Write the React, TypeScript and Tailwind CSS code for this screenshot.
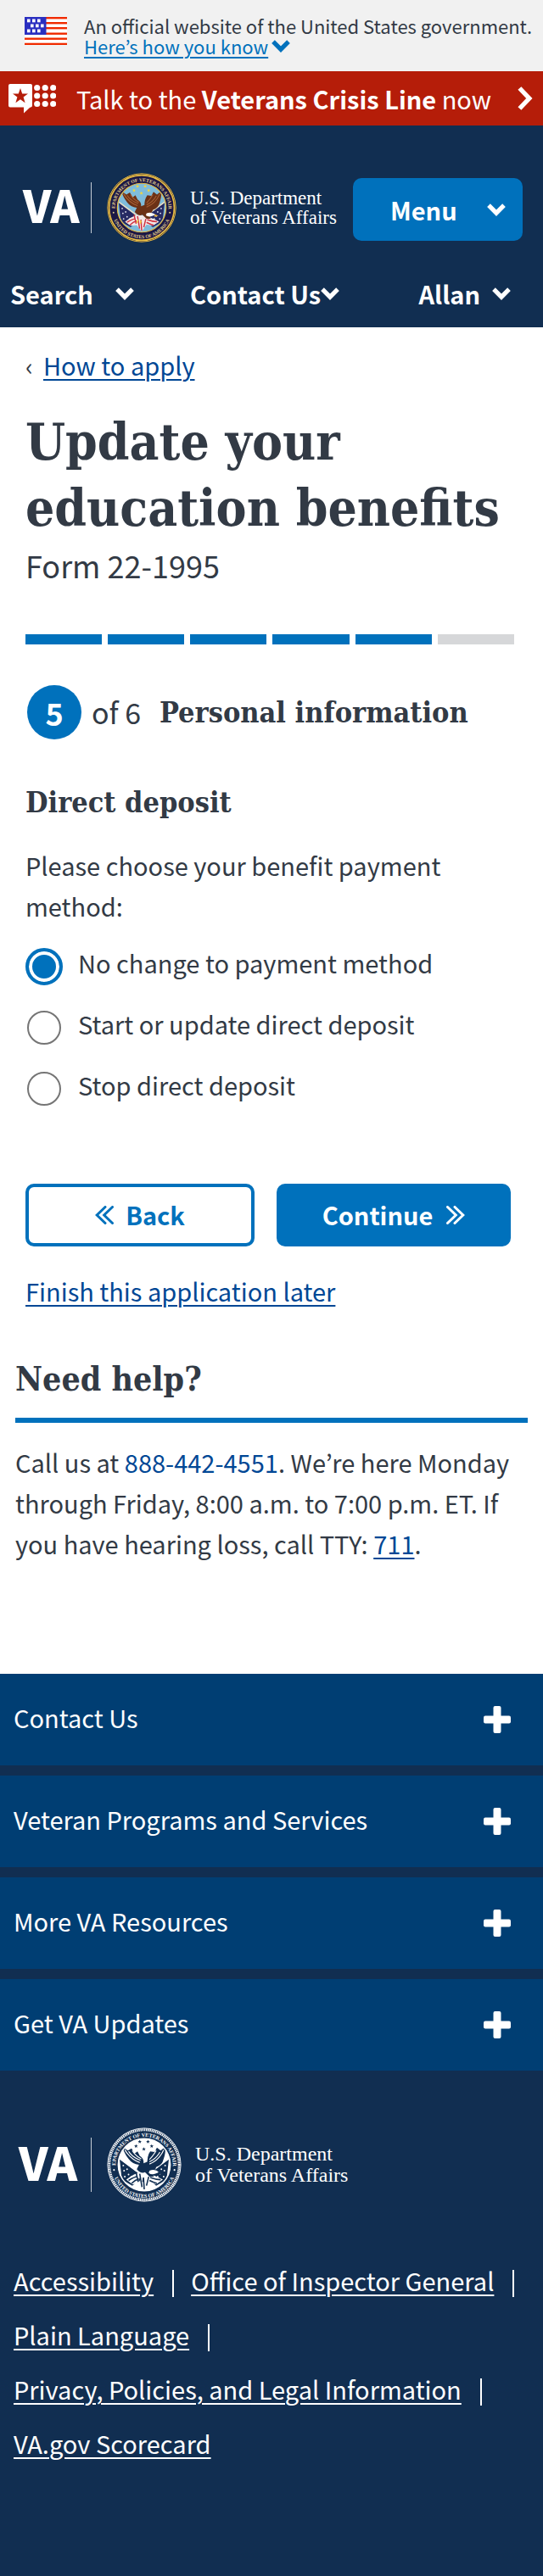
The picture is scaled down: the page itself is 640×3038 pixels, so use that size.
import { useState } from 'react';

const NAVY = '#112e51';

function ChevronDown({ className }: { className: string }) {
  return (
    <svg viewBox="0 0 22 15" className={className} fill="none" stroke="currentColor" strokeWidth="5.2" strokeLinejoin="miter" aria-hidden="true">
      <path d="M2 2.2 L11 11.2 L20 2.2" />
    </svg>
  );
}

function ChevronRight({ className }: { className: string }) {
  return (
    <svg viewBox="0 0 18 28" className={className} fill="none" stroke="currentColor" strokeWidth="5.4" aria-hidden="true">
      <path d="M2.4 2 L13.8 14 L2.4 26" />
    </svg>
  );
}

function DoubleChevron({ direction }: { direction: 'left' | 'right' }) {
  const d =
    direction === 'left'
      ? 'M12 1.5 L2.2 11 L12 20.5 M20.5 1.5 L10.7 11 L20.5 20.5'
      : 'M1.5 1.5 L11.3 11 L1.5 20.5 M10 1.5 L19.8 11 L10 20.5';
  return (
    <svg viewBox="0 0 22 22" className="size-[22px]" fill="none" stroke="currentColor" strokeWidth="3" strokeLinecap="round" aria-hidden="true">
      <path d={d} />
    </svg>
  );
}

function Plus() {
  return (
    <svg viewBox="0 0 32 32" className="size-8" fill="currentColor" aria-hidden="true">
      <rect x="11.5" y="0" width="9" height="32" rx="2" />
      <rect x="0" y="11.5" width="32" height="9" rx="2" />
    </svg>
  );
}

function Flag() {
  const stars: [number, number][] = [
    [3, 2.5], [9, 2.5], [15, 2.5],
    [7, 8.5], [13, 8.5], [19, 8.5],
    [3, 14.5], [9, 14.5], [15, 14.5],
  ];
  return (
    <svg viewBox="0 0 50 33" className="mt-[2px] h-[33px] w-[50px] shrink-0" aria-hidden="true">
      <rect width="50" height="33" fill="#fff" />
      {[0, 6, 12, 18.5, 24.5, 30.7].map((y) => (
        <rect key={y} y={y} width="50" height="2.4" fill="#f02b00" />
      ))}
      <rect width="25.5" height="21" fill="#2a2fc0" />
      {stars.map(([x, y]) => (
        <rect key={`${x}-${y}`} x={x} y={y} width="3.6" height="3.8" fill="#fff" />
      ))}
    </svg>
  );
}

function CrisisIcon() {
  return (
    <svg viewBox="0 0 56 35" className="h-[35px] w-14 shrink-0" aria-hidden="true">
      <path d="M2 0 H26 Q28 0 28 2 V25.5 Q28 27.5 26 27.5 L25 28 L18 34.5 V27.5 H2 Q0 27.5 0 25.5 V2 Q0 0 2 0 Z" fill="#fff" />
      <path d="M14 5 L16.2 11.5 H23 L17.6 15.6 L19.6 22.3 L14 18.3 L8.4 22.3 L10.4 15.6 L5 11.5 H11.8 Z" fill="#b51d09" />
      {[4.5, 14, 23.5].map((cy) =>
        [34, 43.5, 53].map((cx) => <circle key={`${cx}-${cy}`} cx={cx - 0.3} cy={cy} r="3.6" fill="#fff" />),
      )}
    </svg>
  );
}

const STAR = 'M0 -2.6 L.7 -.8 L2.6 -.8 L1.1 .4 L1.6 2.3 L0 1.2 L-1.6 2.3 L-1.1 .4 L-2.6 -.8 L-.7 -.8 Z';
const STARS: [number, number][] = [[44, 19], [55, 19], [39, 25], [60, 25], [49.5, 29]];

function Seal({ id, mono, className }: { id: string; mono?: boolean; className: string }) {
  const c = mono
    ? { edge: '#fff', ring: NAVY, inner: '#fff', text: '#fff', star: NAVY, wing: NAVY, wingLight: '#fff', flag: NAVY, dot: '#fff', red: NAVY, head: '#fff' }
    : { edge: '#e9bf45', ring: '#1b1846', inner: '#7fbcdb', text: '#e3cf8e', star: '#f4d63c', wing: '#6b3116', wingLight: '#a85f33', flag: '#262a63', dot: '#e8e9f2', red: '#cf3340', head: '#fff' };
  return (
    <svg viewBox="0 0 100 100" className={className} role="img" aria-label="Seal of the U.S. Department of Veterans Affairs">
      <defs>
        <path id={`${id}-top`} d="M11.6 50.7 A38.4 38.4 0 1 1 88.4 50.7" />
        <path id={`${id}-bottom`} d="M6.8 55 A43.4 43.4 0 0 0 93.2 55" />
        <clipPath id={`${id}-clip`}><circle cx="50" cy="50" r="34" /></clipPath>
      </defs>
      <circle cx="50" cy="50" r="49.5" fill={mono ? NAVY : '#2b2038'} />
      <circle cx="50" cy="50" r="49" fill="none" stroke={c.edge} strokeWidth={mono ? 1 : 1.2} />
      <circle cx="50" cy="50" r="46.8" fill={c.ring} stroke={c.edge} strokeWidth={mono ? 3.4 : 2} strokeDasharray={mono ? '1.6 .9' : undefined} />
      <circle cx="50" cy="50" r="35" fill={c.inner} stroke={c.edge} strokeWidth="1.4" />
      <g fill={c.text} fontFamily="Liberation Serif, serif" fontWeight="700" fontSize="7">
        <text textAnchor="middle"><textPath href={`#${id}-top`} startOffset="50%">DEPARTMENT OF VETERANS AFFAIRS</textPath></text>
        <text textAnchor="middle"><textPath href={`#${id}-bottom`} startOffset="50%">UNITED STATES OF AMERICA</textPath></text>
      </g>
      <circle cx="9.5" cy="57" r="1.2" fill={c.text} />
      <circle cx="90.5" cy="57" r="1.2" fill={c.text} />
      <g clipPath={`url(#${id}-clip)`}>
        {STARS.map(([x, y]) => (
          <path key={`${x}-${y}`} d={STAR} fill={c.star} transform={`translate(${x} ${y})`} />
        ))}
        <path d="M17 42 L20 70 L34 78 L48 66 Z" fill={c.flag} />
        <path d="M83 42 L80 70 L66 78 L52 66 Z" fill={c.flag} />
        <path d="M16 41 L46 63 M84 41 L54 63" stroke={mono ? '#fff' : '#e8dfc5'} strokeWidth="2" />
        {[[22, 51], [27, 56], [23, 58], [29, 63], [24, 66], [33, 66], [78, 51], [73, 56], [77, 58], [71, 62], [76, 66], [68, 66]].map(([x, y]) => (
          <circle key={`${x}-${y}`} cx={x} cy={y} r="1.1" fill={c.dot} />
        ))}
        <path d="M26 70 Q36 62 45 60 L56 62 Q68 66 75 70 L66 76 L57 74 L50 84 L43 75 L34 76 Z" fill={mono ? '#fff' : '#f2e8e8'} />
        <path d="M29 71 Q37 66 41 66 M33 75 Q38 70 43 69 M39 60 L42 73 M44 62 L47 80 M49 67 L50 83 M56 66 L53 78 M58 67 Q66 70 72 70 M57 71 Q63 74 67 75" fill="none" stroke={c.red} strokeWidth="1.8" />
        <path d="M21 26 Q23 35 29 42 Q34 49 43 50 L40 56 Q46 63 51 60 L57 66 L63 66 L60 59 Q65 58 66 53 Q74 51 76 42 Q79 34 78 26 L72 31 L67 27 L64 33 L58 32 Q54 38 54 46 L49 48 Q50 42 44 38 L41 32 L37 35 L33 28 L28 31 Z" fill={c.wing} />
        <path d="M24 30 Q32 43 44 47 M29 32 Q34 40 45 44 M34 31 Q38 38 46 42 M76 30 Q70 44 57 49 M71 33 Q66 42 57 46 M66 31 Q62 38 57 43" fill="none" stroke={c.wingLight} strokeWidth="1.3" />
        <path d="M57 58 Q64 55 70 60 L65 62 Q60 64 56 61 Z" fill={c.head} />
        <path d="M69 59 L74 62 L68 63 Z" fill={mono ? NAVY : '#e7b03a'} />
        <path d="M45 67 L43 72 M49 68 L48 73" stroke={c.star} strokeWidth="1.6" />
      </g>
    </svg>
  );
}

const SEPARATED_LINKS = ['Accessibility', 'Office of Inspector General', 'Plain Language', 'Privacy, Policies, and Legal Information', 'VA.gov Scorecard'];
const FOOTER_SECTIONS = ['Contact Us', 'Veteran Programs and Services', 'More VA Resources', 'Get VA Updates'];
const PAYMENT_OPTIONS = ['No change to payment method', 'Start or update direct deposit', 'Stop direct deposit'];

export default function App() {
  const [choice, setChoice] = useState(PAYMENT_OPTIONS[0]);
  return (
    <div className="bg-white font-['Noto_Sans_CJK_KR','Open_Sans',sans-serif] text-[29px] leading-[48px] text-[#323a45]">
      <section className="flex gap-5 bg-[#f1f1f1] py-[18px] pl-[29px] text-[22px] leading-6">
        <Flag />
        <div>
          <p className="whitespace-nowrap">An official website of the United States government.</p>
          <button type="button" className="flex items-center gap-1 text-[#0071bc]">
            <span className="underline decoration-2 underline-offset-3">Here’s how you know</span>
            <ChevronDown className="h-[15px] w-[22px]" />
          </button>
        </div>
      </section>

      <a href="#crisis-line" className="flex h-16 items-center bg-[#b51d09] pr-3 pl-[10px] text-white">
        <CrisisIcon />
        <span className="ml-6 whitespace-nowrap">
          Talk to the <strong className="font-bold">Veterans Crisis Line</strong> now
        </span>
        <ChevronRight className="ml-auto h-7 w-[18px]" />
      </a>

      <header className="bg-[#112e51] pt-[62px] pb-[18px] font-bold text-white">
        <div className="flex h-[74px] items-center justify-between pr-6 pl-[27px]">
          <a href="#home" className="flex items-center pb-1">
            <span className="w-20 pb-2 text-[52px] leading-[76px] font-black">VA</span>
            <span className="h-[60px] w-px bg-[#c5cdd6]" />
            <Seal id="header-seal" className="ml-[18px] size-[82px]" />
            <span className="ml-4 font-['Liberation_Serif',serif] text-[23px] leading-[23px] font-normal whitespace-nowrap">
              U.S. Department
              <br />
              of Veterans Affairs
            </span>
          </a>
          <button type="button" className="flex h-[74px] w-[200px] items-center justify-between rounded-[10px] bg-[#0071bc] pr-5 pl-11 font-bold">
            Menu
            <ChevronDown className="h-[15px] w-[22px]" />
          </button>
        </div>
        <nav className="mt-10 flex h-11 items-center pr-[38px] pl-3 leading-[44px]" aria-label="Account">
          <button type="button" className="flex w-[146px] items-center justify-between font-bold">
            Search
            <ChevronDown className="h-[15px] w-[22px]" />
          </button>
          <button type="button" className="ml-[66px] flex items-center font-bold whitespace-nowrap">
            Contact Us
            <ChevronDown className="h-[15px] w-[22px]" />
          </button>
          <button type="button" className="ml-auto flex items-center gap-[14px] font-bold">
            Allan
            <ChevronDown className="h-[15px] w-[22px]" />
          </button>
        </nav>
      </header>

      <main className="pb-[130px]">
        <div className="px-[30px]">
          <nav className="flex pt-6 leading-10" aria-label="Breadcrumb">
            <span className="w-[21px]">‹</span>
            <a href="#how-to-apply" className="text-[#004795] underline decoration-2 underline-offset-4">How to apply</a>
          </nav>
          <h1 className="mt-8 font-['DejaVu_Serif_Condensed','DejaVu_Serif',serif] text-[60px] leading-[78px] font-bold">
            Update your education benefits
          </h1>
          <p className="mt-[6px] text-4xl leading-[44px]">Form 22-1995</p>

          <div className="mt-[60px] mr-1 grid h-3 grid-cols-6 gap-[7px]" role="progressbar" aria-valuemin={0} aria-valuemax={6} aria-valuenow={5} aria-label="Step 5 of 6">
            {[1, 2, 3, 4, 5].map((n) => (
              <span key={n} className="bg-[#0071bc]" />
            ))}
            <span className="bg-[#d6d7d9]" />
          </div>

          <div className="mt-12 flex items-center pl-[2px]">
            <span className="flex size-16 items-center justify-center rounded-full bg-[#0071bc] text-4xl font-bold text-white">5</span>
            <span className="ml-3 w-20 text-[34px] whitespace-nowrap">of 6</span>
            <h2 className="font-['DejaVu_Serif_Condensed','DejaVu_Serif',serif] text-[34px] leading-[44px] font-bold whitespace-nowrap">
              Personal information
            </h2>
          </div>

          <form onSubmit={(e) => e.preventDefault()}>
            <h3 className="mt-[52px] font-['DejaVu_Serif_Condensed','DejaVu_Serif',serif] text-[34px] leading-[44px] font-bold">Direct deposit</h3>
            <fieldset className="mt-7">
              <legend className="pr-10">Please choose your benefit payment method:</legend>
              <div className="mt-3">
                {PAYMENT_OPTIONS.map((option) => (
                  <label key={option} className="flex h-[72px] items-center">
                    <span className="flex size-11 items-center justify-center">
                      <input
                        type="radio"
                        name="payment"
                        checked={choice === option}
                        onChange={() => setChoice(option)}
                        className="size-10 appearance-none rounded-full border-2 border-[#757575] bg-white checked:size-11 checked:border-4 checked:border-[#0071bc] checked:bg-[#0071bc] checked:shadow-[inset_0_0_0_4px_#fff]"
                      />
                    </span>
                    <span className="ml-[18px] pb-[10px]">{option}</span>
                  </label>
                ))}
              </div>
            </fieldset>
            <div className="mt-[76px] mr-2 grid grid-cols-[270fr_276fr] gap-[26px]">
              <button type="button" className="flex h-[74px] items-center justify-center gap-[14px] rounded-[10px] border-4 border-[#0071bc] font-bold text-[#0071bc]">
                <DoubleChevron direction="left" />
                <span className="pb-[2px]">Back</span>
              </button>
              <button type="submit" className="flex h-[74px] items-center justify-center gap-4 rounded-[10px] bg-[#0071bc] font-bold text-white">
                <span className="pb-[2px]">Continue</span>
                <DoubleChevron direction="right" />
              </button>
            </div>
          </form>
          <a href="#finish-later" className="mt-7 block text-[#004795] underline decoration-2 underline-offset-4">Finish this application later</a>
        </div>

        <section className="mt-[54px] px-[18px]">
          <h2 className="border-b-[6px] border-[#0071bc] pb-5 font-['DejaVu_Serif_Condensed','DejaVu_Serif',serif] text-[39px] leading-[52px] font-bold">
            Need help?
          </h2>
          <p className="mt-[22px]">
            Call us at <a href="tel:8884424551" className="text-[#004795]">888-442-4551</a>. We’re here Monday through Friday, 8:00 a.m. to 7:00 p.m. ET. If
            you have hearing loss, call TTY: <a href="tel:711" className="text-[#004795] underline decoration-2 underline-offset-4">711</a>.
          </p>
        </section>
      </main>

      <footer className="bg-[#112e51] pb-[125px] text-white">
        <div className="flex flex-col gap-3">
          {FOOTER_SECTIONS.map((title) => (
            <button key={title} type="button" className="flex h-[108px] items-center justify-between bg-[#003e73] pr-[38px] pl-4">
              <span className="pb-[6px]">{title}</span>
              <Plus />
            </button>
          ))}
        </div>
        <a href="#home" className="mt-[67px] flex h-[88px] items-center pl-[22px]">
          <span className="w-[85px] pb-2 text-[54px] leading-[80px] font-black">VA</span>
          <span className="h-16 w-px bg-[#c5cdd6]" />
          <Seal id="footer-seal" mono className="ml-[18px] size-[88px]" />
          <span className="ml-4 font-['Liberation_Serif',serif] text-2xl leading-[25px] whitespace-nowrap">
            U.S. Department
            <br />
            of Veterans Affairs
          </span>
        </a>
        <ul className="mt-15 flex flex-wrap gap-x-5 px-4 leading-[64px]">
          {SEPARATED_LINKS.map((label, i) => (
            <li key={label} className="flex items-center gap-[22px]">
              <a href="#footer-link" className="whitespace-nowrap underline decoration-2 underline-offset-4">{label}</a>
              {i < SEPARATED_LINKS.length - 1 && <span className="mt-2 h-8 w-[2px] bg-white" />}
            </li>
          ))}
        </ul>
      </footer>
    </div>
  );
}
